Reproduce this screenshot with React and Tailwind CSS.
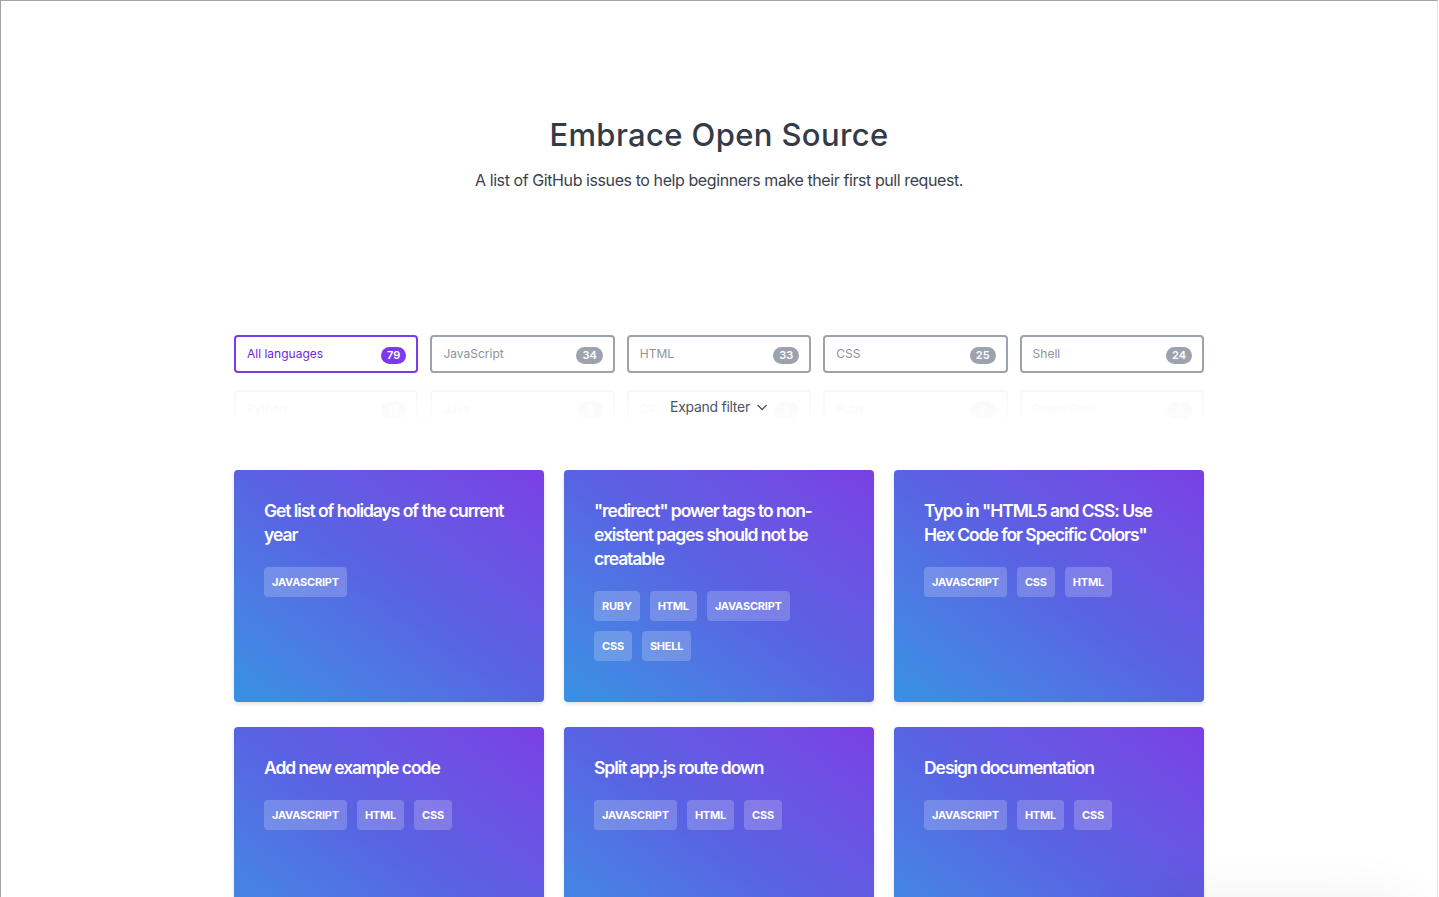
import React from 'react';

const languages = [
  { name: 'All languages', count: 79, active: true },
  { name: 'JavaScript', count: 34 },
  { name: 'HTML', count: 33 },
  { name: 'CSS', count: 25 },
  { name: 'Shell', count: 24 },
];

const moreLanguages = [
  { name: 'Python', count: 15 },
  { name: 'Java', count: 8 },
  { name: 'C#', count: 8 },
  { name: 'Ruby', count: 7 },
  { name: 'PowerShell', count: 6 },
];

const issues = [
  { title: 'Get list of holidays of the current year', tags: ['javascript'] },
  { title: '"redirect" power tags to non-existent pages should not be creatable', tags: ['ruby', 'html', 'javascript', 'css', 'shell'] },
  { title: 'Typo in "HTML5 and CSS: Use Hex Code for Specific Colors"', tags: ['javascript', 'css', 'html'] },
  { title: 'Add new example code', tags: ['javascript', 'html', 'css'] },
  { title: 'Split app.js route down', tags: ['javascript', 'html', 'css'] },
  { title: 'Design documentation', tags: ['javascript', 'html', 'css'] },
];

const FilterButton = ({ lang }) => (
  <button
    type="button"
    className={
      lang.active
        ? 'flex h-[38px] items-center justify-between rounded-[4px] border-2 border-[#7c3aed] bg-white pl-[11px] pr-[10px] text-[12px] text-[#6d28d9]'
        : 'flex h-[38px] items-center justify-between rounded-[4px] border-2 border-[#9ca3af] bg-white pl-[11px] pr-[10px] text-[12px] text-[#8d939c]'
    }
  >
    <span>{lang.name}</span>
    <span
      className={
        lang.active
          ? 'mt-[2px] flex h-[17px] min-w-[25px] items-center justify-center rounded-full bg-[#7c3aed] px-[6px] text-[11px] font-semibold text-white'
          : 'mt-[2px] flex h-[17px] min-w-[25px] items-center justify-center rounded-full bg-[#9ca3af] px-[6px] text-[11px] font-semibold text-white'
      }
    >
      {lang.count}
    </span>
  </button>
);

const IssueCard = ({ issue }) => (
  <div className="h-[232px] rounded-[4px] bg-gradient-to-tr from-[#3592e3] via-[#5863e3] to-[#7a3fe4] px-[30px] pt-[29px] shadow-[0_2px_4px_rgba(0,0,0,0.12)]">
    <h3 className="text-[17.5px] font-semibold leading-[24px] tracking-[-0.06em] text-white">{issue.title}</h3>
    <div className="mt-[20px] flex flex-wrap">
      {issue.tags.map((t) => (
        <span
          key={t}
          className="mb-[10px] mr-[10px] flex h-[30px] items-center rounded-[4px] bg-white/20 px-[8px] text-[11px] font-bold uppercase tracking-[-0.02em] text-white"
        >
          {t}
        </span>
      ))}
    </div>
  </div>
);

export default function App() {
  return (
    <div className="relative min-h-screen w-[1438px] overflow-hidden border-t border-l border-r border-t-[#a3a3a3] border-l-[#a3a3a3] border-r-[#e4e4e4] bg-white font-['Inter','Noto_Sans',sans-serif]">
      <header className="pt-[114px] text-center">
        <h1 className="text-[31px] font-medium leading-[40px] tracking-[0.012em] text-[#343b48]">Embrace Open Source</h1>
        <p className="mt-[15px] text-[16px] leading-[20px] tracking-[-0.026em] text-[#3b414c]">
          A list of GitHub issues to help beginners make their first pull request.
        </p>
      </header>

      <div className="mx-auto w-[970px]">
        {/* filters */}
        <div className="mt-[145px]">
          <div className="grid grid-cols-5 gap-x-3">
            {languages.map((l) => (
              <FilterButton key={l.name} lang={l} />
            ))}
          </div>
          <div className="relative mt-[17px] h-[29px] overflow-hidden">
            <div className="grid grid-cols-5 gap-x-3 opacity-[0.08]">
              {moreLanguages.map((l) => (
                <FilterButton key={l.name} lang={l} />
              ))}
            </div>
            <div className="absolute inset-0 bg-gradient-to-b from-white/0 to-white/70" />
            <button
              type="button"
              className="absolute left-1/2 top-[8px] flex -translate-x-1/2 items-center gap-[6px] text-[14px] leading-[18px] tracking-[-0.02em] text-[#4b5563]"
            >
              Expand filter
              <svg width="12" height="12" viewBox="0 0 12 12" fill="none" stroke="currentColor" strokeWidth="1.3">
                <path d="M1.5 4l4.5 4.5L10.5 4" />
              </svg>
            </button>
          </div>
        </div>

        {/* issues */}
        <div className="mt-[51px] grid grid-cols-3 gap-x-5 gap-y-[25px]">
          {issues.map((i) => (
            <IssueCard key={i.title} issue={i} />
          ))}
        </div>
      </div>

      <div className="pointer-events-none absolute left-[1150px] top-[930px] h-[40px] w-[240px] rounded-full shadow-[0_0_60px_30px_rgba(0,0,0,0.07)]" />
    </div>
  );
}
